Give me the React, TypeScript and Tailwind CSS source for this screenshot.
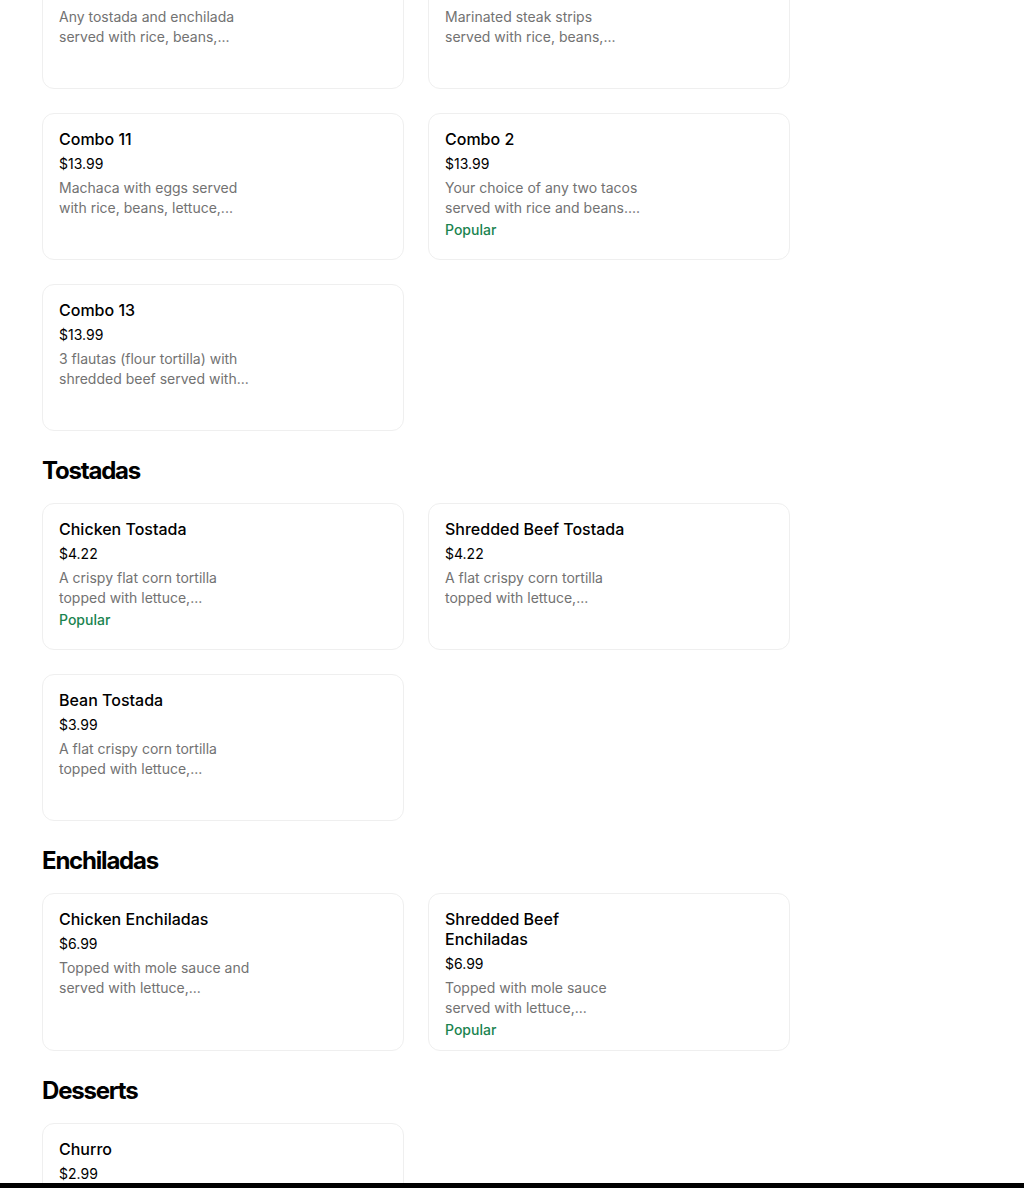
type Item = {
  name: string
  price: string
  desc: [string, string]
  popular?: boolean
}

type Section = {
  title?: string
  items: Item[]
}

const sections: Section[] = [
  {
    items: [
      { name: "Combo 10", price: "$13.99", desc: ["Any tostada and enchilada", "served with rice, beans,..."] },
      { name: "Combo 12", price: "$13.99", desc: ["Marinated steak strips", "served with rice, beans,..."] },
      { name: "Combo 11", price: "$13.99", desc: ["Machaca with eggs served", "with rice, beans, lettuce,..."] },
      { name: "Combo 2", price: "$13.99", desc: ["Your choice of any two tacos", "served with rice and beans...."], popular: true },
      { name: "Combo 13", price: "$13.99", desc: ["3 flautas (flour tortilla) with", "shredded beef served with..."] },
    ],
  },
  {
    title: "Tostadas",
    items: [
      { name: "Chicken Tostada", price: "$4.22", desc: ["A crispy flat corn tortilla", "topped with lettuce,..."], popular: true },
      { name: "Shredded Beef Tostada", price: "$4.22", desc: ["A flat crispy corn tortilla", "topped with lettuce,..."] },
      { name: "Bean Tostada", price: "$3.99", desc: ["A flat crispy corn tortilla", "topped with lettuce,..."] },
    ],
  },
  {
    title: "Enchiladas",
    items: [
      { name: "Chicken Enchiladas", price: "$6.99", desc: ["Topped with mole sauce and", "served with lettuce,..."] },
      { name: "Shredded Beef Enchiladas", price: "$6.99", desc: ["Topped with mole sauce", "served with lettuce,..."], popular: true },
    ],
  },
  {
    title: "Desserts",
    items: [
      { name: "Churro", price: "$2.99", desc: ["Fried dough pastry rolled in", "cinnamon sugar,..."] },
    ],
  },
]

function MenuCard({ item }: { item: Item }) {
  return (
    <div className="min-h-[147px] rounded-xl border border-[#efefef] bg-white px-4 pt-[15px] pb-[10px]">
      <div className="w-[190px]">
        <div className="text-[16px] font-medium leading-5 text-black">{item.name}</div>
        <div className="mt-[5px] text-[14px] leading-5 text-black">{item.price}</div>
        <div className="mt-1 text-[14px] leading-5 text-[#727272]">
          <div className="whitespace-nowrap">{item.desc[0]}</div>
          <div className="whitespace-nowrap">{item.desc[1]}</div>
        </div>
        {item.popular && (
          <div className="mt-[2px] text-[14px] font-medium leading-5 text-[#1a8450]">Popular</div>
        )}
      </div>
    </div>
  )
}

export default function App() {
  return (
    <div className="relative h-[1188px] overflow-hidden bg-white font-['Inter',sans-serif]">
      <div className="mt-[-58px] pl-[42px]">
        {sections.map((section, i) => (
          <div key={i}>
            {section.title && (
              <h2 className="mt-6 mb-4 text-[24px] font-bold leading-8 tracking-[-1.2px] text-black">
                {section.title}
              </h2>
            )}
            <div className="grid grid-cols-[362px_362px] gap-6">
              {section.items.map((item) => (
                <MenuCard key={item.name} item={item} />
              ))}
            </div>
          </div>
        ))}
      </div>
      <div className="absolute bottom-0 left-0 h-[5px] w-full bg-black" />
    </div>
  )
}
